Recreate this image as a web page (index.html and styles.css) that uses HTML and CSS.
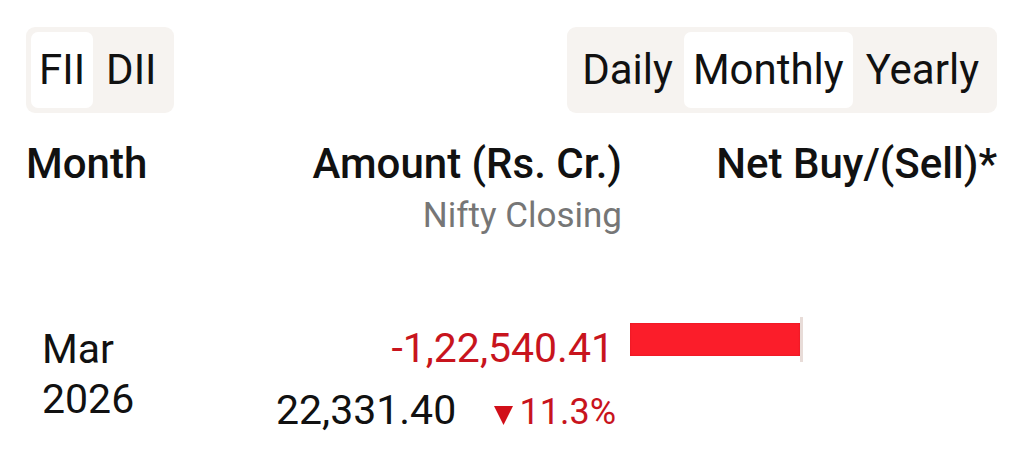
FILE: index.html
```html
<!DOCTYPE html>
<html lang="en">
<head>
<meta charset="utf-8">
<title>FII / DII Activity</title>
<link rel="stylesheet" href="styles.css">
</head>
<body>
<div class="page">
  <div class="toolbar">
    <div class="seg">
      <span class="seg-btn narrow active">FII</span>
      <span class="seg-btn wide">DII</span>
    </div>
    <div class="seg">
      <span class="seg-btn mid">Daily</span>
      <span class="seg-btn narrow-ish active">Monthly</span>
      <span class="seg-btn wide-ish">Yearly</span>
    </div>
  </div>

  <div class="row head">
    <div class="c1">Month</div>
    <div class="c2">
      <div class="h">Amount (Rs. Cr.)</div>
      <div class="sub">Nifty Closing</div>
    </div>
    <div class="c3">Net Buy/(Sell)*</div>
  </div>

  <div class="row data">
    <div class="c1 month">Mar<br>2026</div>
    <div class="c2 vals">
      <div class="amt neg">-1,22,540.41</div>
      <div class="nifty">
        <span class="close">22,331.40</span>
        <span class="chg neg"><svg class="tri" width="19" height="19" viewBox="0 0 19 19"><polygon points="0,0 19,0 9.5,19" fill="#d10f19"/></svg>11.3%</span>
      </div>
    </div>
    <div class="c3 chart">
      <div class="bars">
        <div class="half left"><div class="bar" style="width:100%"></div></div>
        <div class="axis"></div>
        <div class="half right"></div>
      </div>
    </div>
  </div>
</div>
</body>
</html>
```

FILE: styles.css
```css
* { box-sizing: border-box; }

html, body {
  margin: 0;
  background: #ffffff;
}

body {
  font-family: Roboto, "Liberation Sans", Arial, sans-serif;
  color: #111111;
}

.page {
  padding: 27px 27px 0 26px;
}

.toolbar {
  display: flex;
  justify-content: space-between;
  align-items: flex-start;
}

.seg {
  display: flex;
  background: #f6f3f0;
  border-radius: 9px;
  padding: 5px;
}

.seg-btn {
  font-size: 42px;
  line-height: 76px;
  height: 76px;
  padding: 0 10px;
  border-radius: 7px;
  color: #111111;
}

.seg-btn.narrow { padding: 0 8px; }
.seg-btn.wide { padding: 0 13px; }
.seg-btn.mid { padding: 0 11px 0 10px; }
.seg-btn.narrow-ish { padding: 0 9px; }
.seg-btn.wide-ish { padding: 0 13px; }

.seg-btn.active {
  background: #ffffff;
}

.row {
  display: grid;
  grid-template-columns: 250px 346px 1fr;
}

.head {
  margin-top: 26px;
  font-weight: 500;
  font-size: 42px;
}

.head .c2,
.head .c3 {
  text-align: right;
}

.head .sub {
  font-weight: 400;
  font-size: 35px;
  color: #767676;
  margin-top: 7px;
}

.data {
  margin-top: 88px;
  font-size: 41px;
}

.month {
  padding-left: 16px;
  line-height: 50px;
}

.vals {
  text-align: right;
  padding-right: 8px;
}

.neg {
  color: #c8141d;
}

.nifty {
  margin-top: 14px;
  display: flex;
  justify-content: space-between;
  align-items: baseline;
}

.close {
  color: #111111;
}

.chg {
  font-size: 36px;
  display: inline-flex;
  align-items: baseline;
  gap: 6px;
  margin-right: -2px;
}

.tri {
  display: block;
  align-self: center;
  margin-top: 6px;
}

.chart {
  padding-left: 8px;
  margin-top: -7px;
}

.bars {
  display: flex;
  width: 342px;
  height: 45px;
}

.half {
  flex: 1;
  display: flex;
  padding-top: 6px;
}

.half.left {
  justify-content: flex-end;
}

.bar {
  height: 33px;
  background: #fb1d2a;
  box-shadow: inset 0 0 2px rgba(150, 0, 10, 0.35);
}

.axis {
  width: 3px;
  background: #e8dcd8;
}
```
